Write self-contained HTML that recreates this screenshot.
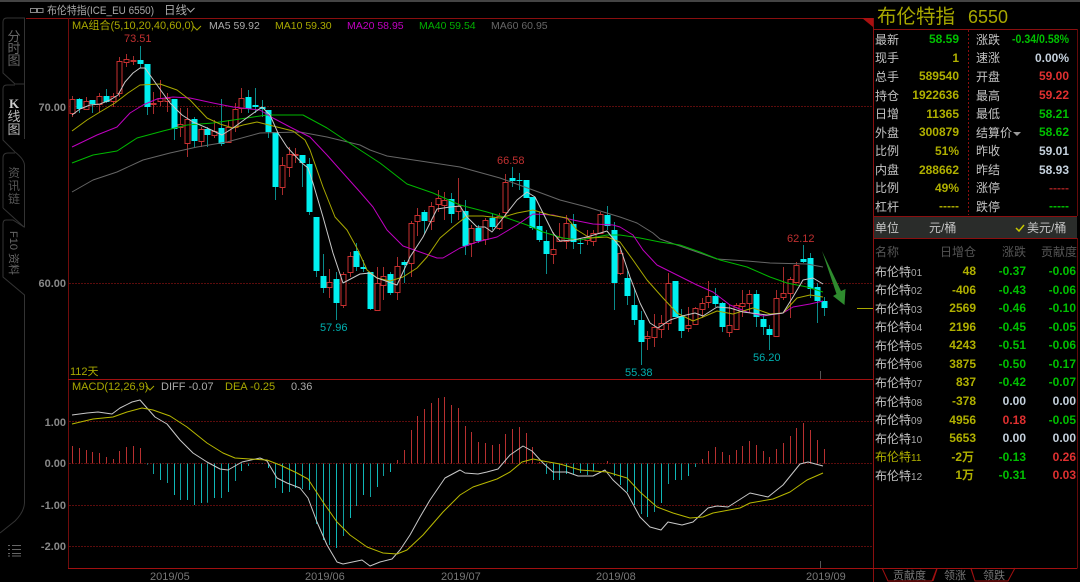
<!DOCTYPE html>
<html><head><meta charset="utf-8"><style>
html,body{margin:0;padding:0;background:#000;width:1080px;height:582px;overflow:hidden}
svg{display:block;position:absolute;left:0;top:0}
text{font-family:"Liberation Sans","Noto Sans CJK SC",sans-serif;font-size:11px;white-space:pre}
.l{font-size:12px;fill:#c4c4c4}
.v{font-size:12px;font-weight:bold;text-anchor:end}
.y{fill:#b0b000}.g{fill:#00c000}.r{fill:#e03030}.w{fill:#c4d0dc}
.a{fill:#888;text-anchor:end;font-weight:bold}
.d{fill:#777;font-size:11px}
.n{font-size:12px;fill:#c4c4c4}
.n tspan{font-size:10px;fill:#aaa}
.h{font-size:12px;fill:#555}
.t{font-size:13px;fill:#666;text-anchor:middle}
</style></head><body>
<svg id="s" width="1080" height="582" viewBox="0 0 1080 582" xmlns="http://www.w3.org/2000/svg">
<rect width="1080" height="582" fill="#000"/>
<rect width="1080" height="2" fill="#444"/>
<!-- frame -->
<g fill="none" stroke="#8a0f0f" stroke-width="1">
<path d="M26 18.5H873.5M873.5 18V582M873 216.5H1077M873 29.5H1077M873 238.5H1077"/>
<path d="M68.5 18V568" stroke="#700c0c"/>
<path d="M1077.500 29V216M1077.500 238V568.500" stroke="#640a0a"/>
<path d="M68 379.5H873M68 568.5H1077" stroke="#a01010"/>
<path d="M968.5 30V215" stroke-dasharray="2 2"/>
</g>
<rect x="874" y="217" width="203" height="21" fill="#2a2c2a"/>
<path d="M862 18H873V27Z" fill="#a81010"/>
<g stroke="#5c0c0c" stroke-width="1" stroke-dasharray="2 1">
<path d="M69 106.5H873M69 283.5H873M69 421.5H873M69 463.5H873M69 505.5H873M69 546.5H873"/>
</g>
<path d="M857 308.5H873" stroke="#a8a800"/>
<path d="M820.5 371V379M820.5 561V568" stroke="#555"/>
<!-- left tabs -->
<g fill="none" stroke="#333" stroke-width="1">
<path d="M3 73V22Q3 18 7 18H24.5V84H15Z"/>
<path d="M24.5 84V139M15 85H7Q3 85 3 89V140L15 152"/>
<path d="M15 152Q24 159 24.5 165V227H24M3 208V158Q3 153 8 153H15M3 208L24 227"/>
<path d="M24 227L13 220H6Q3 220 3 224V277L24.5 295V503Q24 512 15 521L0 533"/>
</g>
<g class="tabs">
<text class="t" x="14" y="41">分</text><text class="t" x="14" y="53">时</text><text class="t" x="14" y="65">图</text>
<text class="t" x="14" y="108" style="fill:#ccc;font-weight:bold;font-family:'Liberation Serif',serif">K</text><text class="t" x="14" y="121" style="fill:#bbb">线</text><text class="t" x="14" y="134" style="fill:#bbb">图</text>
<text class="t" x="14" y="177" style="font-size:12px;fill:#555">资</text><text class="t" x="14" y="190" style="font-size:12px;fill:#555">讯</text><text class="t" x="14" y="203" style="font-size:12px;fill:#555">链</text>
<text transform="translate(10,231) rotate(90)" style="font-size:11px;fill:#666">F10 资料</text>
</g>
<g stroke="#666" stroke-width="1">
<path d="M8 545.5H10M12 545.5H21M8 549.5H10M12 549.5H21M8 553.5H10M12 553.5H21M8 556H10M12 556H21"/>
</g>
<!-- title -->
<g fill="none" stroke="#888" stroke-width="1"><rect x="30.5" y="8.5" width="6" height="4"/><rect x="37.5" y="8.5" width="5.5" height="4"/></g>
<text x="47" y="14" textLength="107" lengthAdjust="spacingAndGlyphs" style="font-size:11px;fill:#aaa">布伦特指(ICE_EU 6550)</text>
<text x="164" y="14" style="font-size:11.5px;fill:#aaa">日线</text>
<path d="M187 8L190.500 12L194.500 8" fill="none" stroke="#aaa"/>
<!-- legend -->
<text x="72" y="29" style="fill:#a8a800">MA组合(5,10,20,40,60,0)</text>
<path d="M193 26L197 30L201 26" fill="none" stroke="#a8a800"/>
<text x="209" y="29" style="fill:#aaa;font-size:10.5px">MA5 59.92</text>
<text x="275" y="29" style="fill:#a8a800;font-size:10.5px">MA10 59.30</text>
<text x="347" y="29" style="fill:#c000c0;font-size:10.5px">MA20 58.95</text>
<text x="419" y="29" style="fill:#00b000;font-size:10.5px">MA40 59.54</text>
<text x="491" y="29" style="fill:#666;font-size:10.5px">MA60 60.95</text>
<text x="72" y="390" style="fill:#a8a800">MACD(12,26,9)</text>
<path d="M146 386L150 390L154 386" fill="none" stroke="#a8a800"/>
<text x="161" y="390" style="fill:#aaa">DIFF -0.07</text>
<text x="225" y="390" style="fill:#a8a800">DEA -0.25</text>
<text x="291" y="390" style="fill:#aaa">0.36</text>
<text x="70" y="375" style="fill:#a8a800">112天</text>
<!-- axis -->
<text class="a" x="66" y="111">70.00</text><text class="a" x="66" y="287">60.00</text>
<text class="a" x="66" y="426">1.00</text><text class="a" x="66" y="467">0.00</text><text class="a" x="66" y="509">-1.00</text><text class="a" x="66" y="550">-2.00</text>
<text class="d" x="150" y="580">2019/05</text><text class="d" x="305" y="580">2019/06</text><text class="d" x="441" y="580">2019/07</text><text class="d" x="596" y="580">2019/08</text><text class="d" x="806" y="580">2019/09</text>
<!-- chart -->
<g id="hist"></g>
<g id="cand"></g>
<g fill="none" stroke-width="1" stroke-linejoin="round">
<polyline stroke="#666" points="72,192 93,180 117,172 143,160 170,153 197,147 227,142 260,133 300,132 327,137 360,145 370,150 387,156 427,162 460,167 500,178 533,190 560,200 587,207 620,217 637,223 653,233 660,239 677,245 697,252 717,259 747,261 770,263 807,264 823,267"/>
<polyline stroke="#00b800" points="72,163 93,155 117,151 137,138 163,131 187,125 213,123 240,119 267,115 303,115 327,128 360,150 380,163 407,184 433,193 460,205 487,212 507,218 527,225 543,232 563,238 580,240 607,235 620,235 640,238 660,242 680,245 700,252 720,260 747,267 770,277 787,283 807,287 823,292"/>
<polyline stroke="#c000c0" points="72,147 97,135 117,127 130,113 143,105 157,99 173,97 190,98 213,103 233,107 260,110 273,118 290,127 310,137 327,155 343,173 360,192 373,207 387,230 403,246 420,252 437,258 443,258 460,248 477,242 497,237 517,225 533,214 553,215 573,220 593,224 613,225 620,227 633,235 643,250 657,265 677,275 697,285 713,292 730,305 747,312 763,316 783,313 793,307 810,304 823,301"/>
<polyline stroke="#a8a800" points="72,131 87,120 100,112 115,103 128,93 140,85 160,84 177,90 190,100 207,118 220,124 233,128 243,125 257,122 273,126 293,131 305,140 310,150 323,187 335,217 347,230 358,250 367,270 377,278 390,281 403,277 417,268 427,257 440,238 453,227 467,216 483,216 500,218 517,213 533,210 550,215 567,218 577,230 590,238 607,237 620,242 633,260 647,280 663,298 677,313 693,321 703,317 717,311 733,314 753,308 770,314 783,313 797,298 810,295 823,297"/>
<polyline stroke="#c8c8c8" points="72,115 80,109 90,105 100,104 110,100 118,95 125,82 133,73 140,68 145,68 157,85 170,103 182,115 193,122 207,128 222,135 233,128 248,117 262,107 270,115 278,133 287,147 302,163 308,168 313,183 323,217 333,253 343,283 360,274 370,273 377,278 397,285 410,257 423,237 437,209 450,207 460,206 467,217 477,227 485,227 492,232 503,218 517,200 527,192 535,197 543,213 553,233 560,241 573,240 587,237 607,231 620,247 630,277 640,303 650,323 658,328 670,320 682,316 695,313 703,316 717,307 730,308 743,312 767,315 783,313 793,297 803,280 813,278 823,284"/>
<polyline stroke="#c8c8c8" points="72,415 87,413 98,412 112,414 120,408 132,402 140,400 147,408 155,417 167,424 180,440 193,453 207,462 220,469 228,470 242,462 260,458 267,461 277,478 287,483 300,488 308,498 317,522 327,545 337,562 343,564 362,560 370,566 380,562 392,559 400,550 410,535 420,517 430,500 445,478 460,470 465,473 478,474 487,472 498,469 510,455 523,446 532,451 543,463 553,472 567,472 578,476 593,476 605,470 613,480 627,493 640,517 650,527 661,530 668,522 682,525 693,522 708,508 717,506 728,507 750,493 768,497 783,485 800,464 808,462 823,466"/>
<polyline stroke="#b8b800" points="72,424 93,419 113,417 127,412 142,408 153,410 170,416 187,427 207,443 223,453 235,458 250,459 267,460 280,465 297,473 308,479 323,502 337,522 350,535 367,547 383,553 397,554 407,550 423,535 443,512 460,495 473,487 497,479 510,472 522,462 533,459 543,461 560,464 580,470 607,472 627,478 640,492 657,507 673,513 690,518 703,517 713,513 740,508 750,503 773,499 790,492 807,480 823,473"/>
</g>
<polygon points="822,251 841,291 845.500,289 844.500,305 833,296 836.500,294" fill="#2e8b2e"/>
<g><text x="124" y="42" fill="#c03030">73.51</text><text x="497" y="164" fill="#c03030">66.58</text><text x="787" y="242" fill="#c03030">62.12</text></g>
<text x="320" y="331" fill="#00b0b0">57.96</text><text x="625" y="376" fill="#00b0b0">55.38</text><text x="753" y="361" fill="#00b0b0">56.20</text>
<!-- right panel -->
<text x="877" y="23" style="font-size:19.5px;fill:#a8a800">布伦特指</text>
<text x="968" y="23" style="font-size:18px;fill:#a8a800">6550</text>
<g>
<text class="l" x="875" y="44">最新</text><text class="v g" x="959" y="43">58.59</text><text class="l" x="976" y="44">涨跌</text><text class="v g" x="1069" y="43" textLength="57" lengthAdjust="spacingAndGlyphs">-0.34/0.58%</text>
<text class="l" x="875" y="62">现手</text><text class="v y" x="959" y="62">1</text><text class="l" x="976" y="62">速涨</text><text class="v w" x="1069" y="62">0.00%</text>
<text class="l" x="875" y="81">总手</text><text class="v y" x="959" y="80">589540</text><text class="l" x="976" y="81">开盘</text><text class="v r" x="1069" y="80">59.00</text>
<text class="l" x="875" y="100">持仓</text><text class="v y" x="959" y="99">1922636</text><text class="l" x="976" y="100">最高</text><text class="v r" x="1069" y="99">59.22</text>
<text class="l" x="875" y="118">日增</text><text class="v y" x="959" y="118">11365</text><text class="l" x="976" y="118">最低</text><text class="v g" x="1069" y="118">58.21</text>
<text class="l" x="875" y="137">外盘</text><text class="v y" x="959" y="136">300879</text><text class="l" x="976" y="137">结算价</text><path d="M1013 132H1021L1017 136Z" fill="#999"/><text class="v g" x="1069" y="136">58.62</text>
<text class="l" x="875" y="155">比例</text><text class="v y" x="959" y="155">51%</text><text class="l" x="976" y="155">昨收</text><text class="v w" x="1069" y="155">59.01</text>
<text class="l" x="875" y="174">内盘</text><text class="v y" x="959" y="174">288662</text><text class="l" x="976" y="174">昨结</text><text class="v w" x="1069" y="174">58.93</text>
<text class="l" x="875" y="192">比例</text><text class="v y" x="959" y="192">49%</text><text class="l" x="976" y="192">涨停</text><text class="v r" x="1069" y="192" style="fill:#a02020">-----</text>
<text class="l" x="875" y="211">杠杆</text><text class="v y" x="959" y="210">-----</text><text class="l" x="976" y="211">跌停</text><text class="v g" x="1069" y="210">-----</text>
</g>
<text class="l" x="875" y="232">单位</text><text class="l" x="929" y="232">元/桶</text>
<path d="M1016 228L1019 231L1024 225" fill="none" stroke="#c8c800" stroke-width="1.500"/>
<text class="l" x="1027" y="232">美元/桶</text>
<text class="h" x="875" y="256">名称</text><text class="h" x="940" y="256">日增仓</text><text class="h" x="1002" y="256">涨跌</text><text class="h" x="1041" y="256">贡献度</text>
<g id="tb">
<text class="n" x="875" y="276">布伦特<tspan>01</tspan></text><text class="v y" x="976" y="275">48</text><text class="v g" x="1026" y="275">-0.37</text><text class="v g" x="1076" y="275">-0.06</text>
<text class="n" x="875" y="294">布伦特<tspan>02</tspan></text><text class="v y" x="976" y="294">-406</text><text class="v g" x="1026" y="294">-0.43</text><text class="v g" x="1076" y="294">-0.06</text>
<text class="n" x="875" y="313">布伦特<tspan>03</tspan></text><text class="v y" x="976" y="312">2569</text><text class="v g" x="1026" y="312">-0.46</text><text class="v g" x="1076" y="312">-0.10</text>
<text class="n" x="875" y="331">布伦特<tspan>04</tspan></text><text class="v y" x="976" y="331">2196</text><text class="v g" x="1026" y="331">-0.45</text><text class="v g" x="1076" y="331">-0.05</text>
<text class="n" x="875" y="350">布伦特<tspan>05</tspan></text><text class="v y" x="976" y="349">4243</text><text class="v g" x="1026" y="349">-0.51</text><text class="v g" x="1076" y="349">-0.06</text>
<text class="n" x="875" y="368">布伦特<tspan>06</tspan></text><text class="v y" x="976" y="368">3875</text><text class="v g" x="1026" y="368">-0.50</text><text class="v g" x="1076" y="368">-0.17</text>
<text class="n" x="875" y="387">布伦特<tspan>07</tspan></text><text class="v y" x="976" y="386">837</text><text class="v g" x="1026" y="386">-0.42</text><text class="v g" x="1076" y="386">-0.07</text>
<text class="n" x="875" y="406">布伦特<tspan>08</tspan></text><text class="v y" x="976" y="405">-378</text><text class="v w" x="1026" y="405">0.00</text><text class="v w" x="1076" y="405">0.00</text>
<text class="n" x="875" y="424">布伦特<tspan>09</tspan></text><text class="v y" x="976" y="424">4956</text><text class="v r" x="1026" y="424">0.18</text><text class="v g" x="1076" y="424">-0.05</text>
<text class="n" x="875" y="443">布伦特<tspan>10</tspan></text><text class="v y" x="976" y="442">5653</text><text class="v w" x="1026" y="442">0.00</text><text class="v w" x="1076" y="442">0.00</text>
<text class="n" x="875" y="461" style="fill:#b0b000">布伦特<tspan style="fill:#b0b000">11</tspan></text><text class="v y" x="974" y="461">-2万</text><text class="v g" x="1026" y="461">-0.13</text><text class="v r" x="1076" y="461">0.26</text>
<text class="n" x="875" y="480">布伦特<tspan>12</tspan></text><text class="v y" x="974" y="479">1万</text><text class="v g" x="1026" y="479">-0.31</text><text class="v r" x="1076" y="479">0.03</text>
</g>
<path d="M882 568L888 581H932L937 568M933 581L937 569M971 568L975 581H1008L1015 568M975 581L971 569" fill="none" stroke="#a01010"/>
<text x="893" y="579" style="fill:#777">贡献度</text><text x="944" y="579" style="fill:#777">领涨</text><text x="983" y="579" style="fill:#777">领跌</text>
</svg>
<script>
var C="r99,113,96,117 c99,109,98,113 r101,109,97,110 c100,104,100,113 r96,104,93,112 c96,102,89,103 r96,101,93,107 r61,93,57,97 r59,62,54,67 r60,61,56,65 c60,64,46,68 c64,107,64,115 r103,104,92,114 r98,101,80,106 r98,101,93,112 c99,129,99,140 r124,127,108,137 r119,143,108,157 c119,141,117,147 r129,141,127,147 c129,135,127,147 r131,135,120,138 c128,144,99,146 r127,142,120,143 r109,127,103,132 r98,108,88,113 c97,109,90,113 c105,107,88,113 c107,109,100,117 c110,132,110,138 c132,187,132,200 r165,187,157,195 r154,167,147,177 r154,155,148,163 c155,163,155,187 c164,212,158,215 c217,271,217,277 c276,288,254,293 r282,287,269,298 c279,303,272,320 r274,305,272,308 r256,272,252,277 c251,267,243,271 c267,269,260,272 c272,309,272,310 r283,310,267,311 r276,285,267,300 c274,293,272,295 r266,292,257,300 c262,265,260,283 r223,263,221,277 r215,221,208,236 c212,221,210,234 r206,221,202,230 r198,204,190,212 r200,205,192,220 c199,214,193,223 r206,211,178,220 c211,246,200,255 r228,243,225,257 c228,241,225,243 r220,239,218,245 c218,227,213,230 r216,228,213,230 r182,212,174,217 c178,181,167,187 c180,181,173,190 c180,198,180,198 c197,228,197,230 c226,240,212,242 c241,254,230,274 r249,254,232,264 r237,241,223,242 r223,241,215,249 c224,242,214,249 c243,244,238,254 r237,240,230,245 r233,241,230,246 r214,233,212,233 c215,226,206,230 c230,283,222,310 r253,273,250,275 c278,296,271,305 c305,320,288,325 c320,342,311,365 r336,338,331,350 r327,337,314,347 r323,329,315,338 r283,323,273,330 c281,317,281,317 c316,331,309,338 r325,328,307,332 r308,324,307,325 r303,309,298,318 r296,302,281,308 c296,304,288,307 c303,327,302,332 r325,332,305,337 r305,329,303,330 r303,306,290,317 r294,303,290,313 c294,317,290,327 c319,327,315,335 c329,335,325,350 r298,336,290,336 r293,297,267,300 r279,293,277,318 r265,282,262,283 c259,262,245,263 c258,289,253,298 c287,301,283,323 c301,308,297,316".split(" ");
var H=[446,448,450,452,453,457,459,451,447,446,448,464.5,474,480,483,495,500,500,505,503,502.7,498,498,492,481,471,466,463.5,464,468,488,493,492,488,489,490,524,540,545,548,536,518,506,495,497,487,476,472,460,450,430,416,409,403,398,397,405,408,426,432,442,443,445,444,434,429,427,433,447,462,474,480,480,474,474,473,475,471,463.5,461,476,485,492,505,514,517,512,503,484,480,480,476,467,459,451,447,452,455,450,446,441,445,451,457,449,443,436,428,423,430,440,449];
var c="",h="";
for(var i=0;i<112;i++){
 var x=+(72+6.77*i).toFixed(1),xx=Math.round(x)+.5,t=C[i][0],p=C[i].slice(1).split(",").map(Number);
 if(t=="c"){
  c+='<path d="M'+xx+' '+p[2]+'V'+p[3]+'" stroke="#0a8c8c"/><rect x="'+(xx-3)+'" y="'+p[0]+'" width="6" height="'+(p[1]-p[0])+'" fill="#00f0f0"/>';
 }else{
  c+='<path d="M'+xx+' '+p[2]+'V'+p[3]+'" stroke="#a82c2c"/><rect x="'+(xx-2.5)+'" y="'+(p[0]+.5)+'" width="5" height="'+Math.max(1,p[1]-p[0])+'" fill="#000" stroke="#c83030"/>';
 }
 var y=H[i];
 if(y<463.5)h+='<path d="M'+xx+' 463.500V'+y+'" stroke="#b83030"/>';
 else if(y>463.5)h+='<path d="M'+xx+' 463.500V'+y+'" stroke="'+(i%2?"#0fb8b8":"#0fa0a0")+'"/>';
}
document.getElementById("cand").innerHTML=c;
document.getElementById("hist").innerHTML=h;
</script>
</body></html>
